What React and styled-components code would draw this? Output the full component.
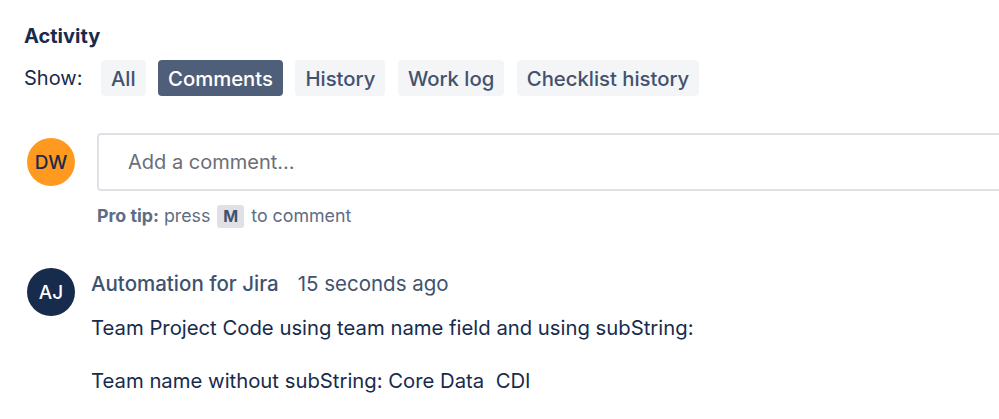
import React from "react";
import styled, { createGlobalStyle } from "styled-components";

const Global = createGlobalStyle`
  html, body {
    margin: 0;
    padding: 0;
    background: #ffffff;
    overflow: hidden;
  }
  body {
    font-family: Inter, "Noto Sans", "Liberation Sans", sans-serif;
    color: #172b4d;
    -webkit-font-smoothing: antialiased;
  }
`;

const Page = styled.section`
  padding: 24px 0 0 24px;
`;

const Title = styled.h2`
  margin: 0;
  font-size: 20px;
  font-weight: 700;
  line-height: 24px;
  color: #172b4d;
`;

const FilterBar = styled.div`
  display: flex;
  align-items: center;
  gap: 12.5px;
  margin-top: 12px;
`;

const ShowLabel = styled.span`
  font-size: 20px;
  line-height: 36px;
  color: #172b4d;
  margin-right: 6px;
`;

const FilterButton = styled.button`
  height: 36px;
  padding: 0 10px;
  border: none;
  border-radius: 4px;
  font-family: inherit;
  font-size: 20.3px;
  font-weight: 500;
  background: ${(p) => (p.$active ? "#505f79" : "#f4f5f7")};
  color: ${(p) => (p.$active ? "#ffffff" : "#42526e")};
  cursor: pointer;
`;

const Composer = styled.div`
  display: flex;
  align-items: center;
  gap: 22px;
  margin-top: 37px;
  margin-right: -40px;
`;

const Avatar = styled.div`
  flex: none;
  width: 48px;
  height: 48px;
  margin-left: 3px;
  border-radius: 50%;
  display: flex;
  align-items: center;
  justify-content: center;
  font-size: 19px;
  font-weight: 500;
  background: ${(p) => p.$bg};
  color: ${(p) => p.$fg};
  align-self: ${(p) => (p.$top ? "flex-start" : "center")};
`;

const CommentField = styled.div`
  flex: 1;
  height: 58px;
  box-sizing: border-box;
  border: 2px solid #dfe1e6;
  border-radius: 4px;
  display: flex;
  align-items: center;
  padding-left: 29px;
  font-size: 20px;
  color: #6b6e76;
`;

const ProTip = styled.p`
  margin: 13px 0 0 73px;
  font-size: 17.8px;
  line-height: 24px;
  color: #5e6c84;
`;

const Strong = styled.strong`
  font-weight: 700;
`;

const Key = styled.kbd`
  display: inline-block;
  font-family: inherit;
  font-size: 16px;
  font-weight: 700;
  line-height: 23px;
  padding: 0 6px;
  margin: 0 2px;
  border-radius: 3px;
  background: #dfe1e6;
  color: #42526e;
`;

const CommentItem = styled.article`
  display: flex;
  gap: 16px;
  margin-top: 40px;
`;

const CommentBody = styled.div`
  display: flex;
  flex-direction: column;
`;

const Meta = styled.div`
  display: flex;
  gap: 19px;
  font-size: 20.5px;
  line-height: 24px;
  color: #42526e;
  margin-top: 4px;
`;

const Author = styled.span`
  font-weight: 500;
`;

const Paragraph = styled.p`
  margin: ${(p) => (p.$first ? "20px" : "29px")} 0 0;
  font-size: 20.3px;
  line-height: 24px;
  color: #172b4d;
  white-space: pre;
`;

const filters = ["All", "Comments", "History", "Work log", "Checklist history"];

export default function App() {
  return (
    <>
      <Global />
      <Page>
        <Title>Activity</Title>
        <FilterBar>
          <ShowLabel>Show:</ShowLabel>
          {filters.map((f) => (
            <FilterButton key={f} $active={f === "Comments"}>
              {f}
            </FilterButton>
          ))}
        </FilterBar>

        <Composer>
          <Avatar $bg="#ff991f" $fg="#172b4d">DW</Avatar>
          <CommentField>Add a comment…</CommentField>
        </Composer>
        <ProTip>
          <Strong>Pro tip:</Strong> press <Key>M</Key> to comment
        </ProTip>

        <CommentItem>
          <Avatar $bg="#172b4d" $fg="#ffffff" $top>AJ</Avatar>
          <CommentBody>
            <Meta>
              <Author>Automation for Jira</Author>
              <span>15 seconds ago</span>
            </Meta>
            <Paragraph $first>Team Project Code using team name field and using subString:</Paragraph>
            <Paragraph>Team name without subString: Core Data  CDI</Paragraph>
            <Paragraph>Team name with subString: CDI</Paragraph>
          </CommentBody>
        </CommentItem>
      </Page>
    </>
  );
}
